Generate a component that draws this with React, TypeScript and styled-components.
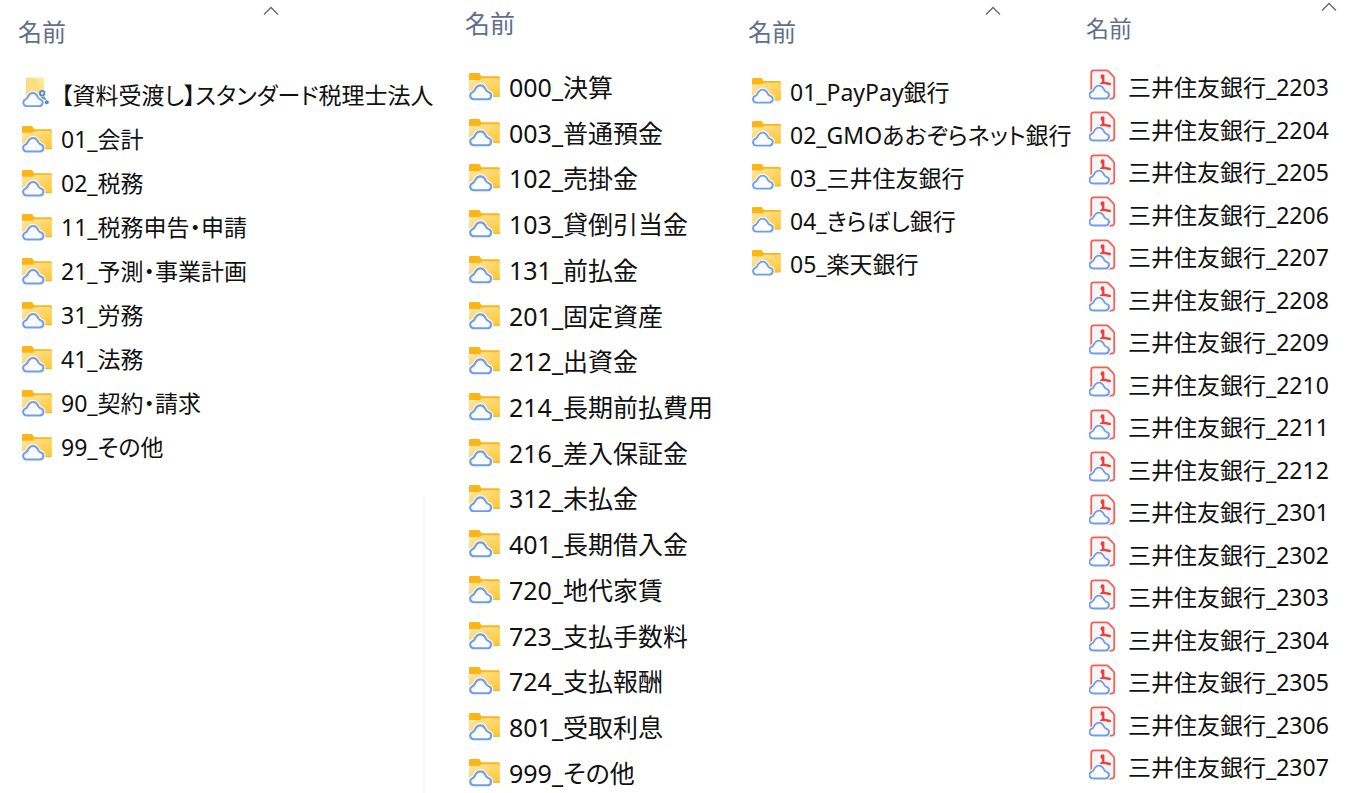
import React from "react";
import styled, { createGlobalStyle } from "styled-components";

const GlobalStyle = createGlobalStyle`
  *, *::before, *::after { box-sizing: border-box; }
  body {
    margin: 0;
    background: #fff;
    color: #111;
    font-family: "Noto Sans", "Noto Sans CJK JP", sans-serif;
    font-feature-settings: "palt";
  }
`;

const Explorer = styled.main`
  display: grid;
  grid-template-columns: 446fr 284fr 338fr 284fr;
  min-height: 100vh;
`;

const Pane = styled.section<{ $bottom?: number }>`
  display: flex;
  flex-direction: column;
  min-width: 0;
  padding-bottom: ${(p) => p.$bottom ?? 0}px;
`;

const HeaderBar = styled.header<{ $height: number; $top: number; $indent: number }>`
  display: flex;
  align-items: flex-start;
  justify-content: space-between;
  height: ${(p) => p.$height}px;
  padding-top: ${(p) => p.$top}px;
  padding-left: ${(p) => p.$indent}px;
`;

const NameButton = styled.button<{ $size: number; $drop: number }>`
  margin: ${(p) => p.$drop}px 0 0;
  padding: 0;
  border: 0;
  background: none;
  color: #5f6f8a;
  font: inherit;
  font-feature-settings: normal;
  font-size: ${(p) => p.$size}px;
  line-height: 32px;
  white-space: nowrap;
`;

const SortMark = styled.svg<{ $inset: number }>`
  display: block;
  flex: none;
  width: 16px;
  height: 10px;
  margin-right: ${(p) => p.$inset}px;
`;

const FileList = styled.ul<{ $fill?: boolean; $indent: number }>`
  display: flex;
  flex-direction: column;
  justify-content: space-between;
  flex: ${(p) => (p.$fill ? "1" : "none")};
  margin: 0;
  padding: 0 0 0 ${(p) => p.$indent}px;
  list-style: none;
`;

const FileRow = styled.a<{ $height: number; $size: number; $gap: number }>`
  display: flex;
  align-items: center;
  gap: ${(p) => p.$gap}px;
  height: ${(p) => p.$height}px;
  color: inherit;
  font-size: ${(p) => p.$size}px;
  line-height: 36px;
  text-decoration: none;
  white-space: nowrap;
`;

const Icon = styled.svg<{ $width: number; $lift?: number }>`
  display: block;
  flex: none;
  width: ${(p) => p.$width}px;
  height: auto;
  margin-bottom: ${(p) => p.$lift ?? 0}px;
`;

const EmptyArea = styled.div`
  flex: 1;
  margin: 26px 21px 0 0;
  border-right: 2px solid #f7f7f7;
`;

const CLOUD =
  "M4.600 25.500h13.200a3.600 3.600 0 0 0 1.200-7c-1.200-.4-1.900-.9-2.500-2-1.200-2.700-3-4.500-5.500-4.500s-4.300 1.800-5.500 4.500c-.5 1.100-1.100 1.700-2.200 2.100a3.600 3.600 0 0 0 1.300 6.900z";

const Cloud = () => (
  <>
    <path d={CLOUD} fill="#fff" stroke="#fff" strokeWidth="4" />
    <path d={CLOUD} fill="#fafcff" stroke="#6e9cee" strokeWidth="2" strokeLinejoin="round" />
  </>
);

const FolderIcon = ({ width }: { width: number }) => (
  <Icon $width={width} viewBox="0 0 30 27" aria-hidden="true">
    <defs>
      <linearGradient id="folder" x1="0" y1="0" x2="1" y2="1">
        <stop offset="0" stopColor="#ffe7a6" />
        <stop offset="1" stopColor="#ffc52e" />
      </linearGradient>
    </defs>
    <path d="M0 1.200Q0 0 1.200 0h8.900l2 3.200H28.600q1.200 0 1.200 1.200V7H0z" fill="#fbb616" />
    <path d="M0 6.800h10.500l2-1.800H29.800v17q0 1.200-1.200 1.200H0z" fill="url(#folder)" />
    <path d="M20 22.600h8.600q1.200 0 1.200-1.200" fill="none" stroke="#f3b52c" strokeWidth="1" />
    <Cloud />
  </Icon>
);

const SharedFolderIcon = () => (
  <Icon $width={30} $lift={6} viewBox="0 0 30 30" aria-hidden="true">
    <defs>
      <linearGradient id="shared" x1="0" y1="0" x2="1" y2="1">
        <stop offset="0" stopColor="#f8dc86" />
        <stop offset="1" stopColor="#ffe27c" />
      </linearGradient>
    </defs>
    <path d="M3.800 2q0-1.200 1.200-1.200h15.800q1.200 0 1.200 1.200v21H3.800z" fill="url(#shared)" />
    <path d="M12 0.800h8.800q1.200 0 1.200 1.200v10l-5-4V5z" fill="#ffe896" />
    <g transform="translate(0.300 4.200) scale(0.950 0.980)">
      <Cloud />
    </g>
    <circle cx="20.200" cy="16.200" r="2.300" fill="#d3e8f8" stroke="#4a8ed0" strokeWidth="1.700" />
    <path d="M20.400 20.600q2 0 2.600 1.600" fill="none" stroke="#5a97de" strokeWidth="2" strokeLinecap="round" />
    <circle cx="24.800" cy="25.200" r="2" fill="#4a8be0" />
  </Icon>
);

const PdfIcon = () => (
  <Icon $width={27} $lift={6} viewBox="0 0 27 31" aria-hidden="true">
    <path
      d="M2.200 27V4q0-2.600 2.600-2.600h12.400q1.400 0 2.400 1l4.600 4.800q1 1 1 2.400V27q0 2.600-2.600 2.600H4.800z"
      fill="#f6f5f5"
      stroke="#fb5b52"
      strokeWidth="1.700"
    />
    <path
      d="M13.800 6.400c-1.400 0-1.400 2.400-.2 2.600M14.200 6.600v7M12 14.800l2.200-1.200 6.600 1.400"
      fill="none"
      stroke="#ef3f3c"
      strokeWidth="2.400"
      strokeLinecap="round"
      strokeLinejoin="round"
    />
    <g transform="translate(-0.600 5.200) scale(0.960 0.950)">
      <Cloud />
    </g>
  </Icon>
);

type Sort = { inset: number };

const Header = (p: {
  height: number;
  top: number;
  indent: number;
  size: number;
  drop: number;
  sort?: Sort;
}) => (
  <HeaderBar $height={p.height} $top={p.top} $indent={p.indent}>
    <NameButton type="button" $size={p.size} $drop={p.drop}>
      名前
    </NameButton>
    {p.sort && (
      <SortMark $inset={p.sort.inset} viewBox="0 0 16 10" aria-hidden="true">
        <path d="M1 8.500l7-7 7 7" fill="none" stroke="#666" strokeWidth="1.300" />
      </SortMark>
    )}
  </HeaderBar>
);

const clientFolders = [
  "【資料受渡し】スタンダード税理士法人",
  "01_会計",
  "02_税務",
  "11_税務申告・申請",
  "21_予測・事業計画",
  "31_労務",
  "41_法務",
  "90_契約・請求",
  "99_その他",
];

const accountFolders = [
  "000_決算",
  "003_普通預金",
  "102_売掛金",
  "103_貸倒引当金",
  "131_前払金",
  "201_固定資産",
  "212_出資金",
  "214_長期前払費用",
  "216_差入保証金",
  "312_未払金",
  "401_長期借入金",
  "720_地代家賃",
  "723_支払手数料",
  "724_支払報酬",
  "801_受取利息",
  "999_その他",
];

const bankFolders = [
  "01_PayPay銀行",
  "02_GMOあおぞらネット銀行",
  "03_三井住友銀行",
  "04_きらぼし銀行",
  "05_楽天銀行",
];

const months = [
  "2203", "2204", "2205", "2206", "2207", "2208", "2209", "2210", "2211",
  "2212", "2301", "2302", "2303", "2304", "2305", "2306", "2307",
];

export default function App() {
  return (
    <>
      <GlobalStyle />
      <Explorer>
        <Pane>
          <Header height={73} top={6} indent={18} size={24} drop={10} sort={{ inset: 167 }} />
          <FileList $indent={22}>
            {clientFolders.map((name, i) => (
              <li key={name}>
                <FileRow href="#" $height={44} $size={23} $gap={9}>
                  {i === 0 ? <SharedFolderIcon /> : <FolderIcon width={30} />}
                  {name}
                </FileRow>
              </li>
            ))}
          </FileList>
          <EmptyArea />
        </Pane>

        <Pane $bottom={2}>
          <Header height={69} top={6} indent={19} size={25} drop={1} />
          <FileList $fill $indent={23}>
            {accountFolders.map((name) => (
              <li key={name}>
                <FileRow href="#" $height={36} $size={25} $gap={9}>
                  <FolderIcon width={31} />
                  {name}
                </FileRow>
              </li>
            ))}
          </FileList>
        </Pane>

        <Pane>
          <Header height={70} top={6} indent={18} size={24} drop={10} sort={{ inset: 67 }} />
          <FileList $indent={22}>
            {bankFolders.map((name) => (
              <li key={name}>
                <FileRow href="#" $height={43} $size={23} $gap={9}>
                  <FolderIcon width={29} />
                  {name}
                </FileRow>
              </li>
            ))}
          </FileList>
        </Pane>

        <Pane $bottom={8}>
          <Header height={69} top={2} indent={18} size={23} drop={10} sort={{ inset: 15 }} />
          <FileList $fill $indent={21}>
            {months.map((month) => (
              <li key={month}>
                <FileRow href="#" $height={36} $size={23} $gap={12}>
                  <PdfIcon />
                  三井住友銀行_{month}
                </FileRow>
              </li>
            ))}
          </FileList>
        </Pane>
      </Explorer>
    </>
  );
}
